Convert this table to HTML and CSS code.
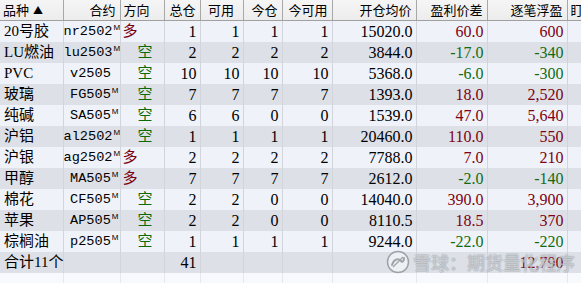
FILE: index.html
```html
<!DOCTYPE html>
<html>
<head>
<meta charset="utf-8">
<link rel="stylesheet" href="styles.css">
</head>
<body>
<div class="wrap">
<table class="grid">
<colgroup>
<col class="c1"><col class="c2"><col class="c3"><col class="c4"><col class="c5"><col class="c6"><col class="c7"><col class="c8"><col class="c9"><col class="c10"><col class="c11">
</colgroup>
<thead>
<tr>
<th class="l">品种<span class="tri">▲</span></th>
<th>合约</th>
<th class="l">方向</th>
<th>总仓</th>
<th class="c">可用</th>
<th>今仓</th>
<th>今可用</th>
<th>开仓均价</th>
<th>盈利价差</th>
<th>逐笔浮盈</th>
<th class="l">盯市浮盈</th>
</tr>
</thead>
<tbody>
<tr class="a"><td class="name">20号胶</td><td class="code">nr2502<sup>M</sup></td><td class="dir"><span class="long">多</span></td><td>1</td><td>1</td><td>1</td><td>1</td><td>15020.0</td><td class="up">60.0</td><td class="up">600</td><td></td></tr>
<tr class="b"><td class="name">LU燃油</td><td class="code">lu2503<sup>M</sup></td><td class="dir"><span class="short">空</span></td><td>2</td><td>2</td><td>2</td><td>2</td><td>3844.0</td><td class="dn">-17.0</td><td class="dn">-340</td><td></td></tr>
<tr class="a"><td class="name">PVC</td><td class="code">v2505<sup class="blank">M</sup></td><td class="dir"><span class="short">空</span></td><td>10</td><td>10</td><td>10</td><td>10</td><td>5368.0</td><td class="dn">-6.0</td><td class="dn">-300</td><td></td></tr>
<tr class="b"><td class="name">玻璃</td><td class="code">FG505<sup>M</sup></td><td class="dir"><span class="short">空</span></td><td>7</td><td>7</td><td>7</td><td>7</td><td>1393.0</td><td class="up">18.0</td><td class="up">2,520</td><td></td></tr>
<tr class="a"><td class="name">纯碱</td><td class="code">SA505<sup>M</sup></td><td class="dir"><span class="short">空</span></td><td>6</td><td>6</td><td>0</td><td>0</td><td>1539.0</td><td class="up">47.0</td><td class="up">5,640</td><td></td></tr>
<tr class="b"><td class="name">沪铝</td><td class="code">al2502<sup>M</sup></td><td class="dir"><span class="short">空</span></td><td>1</td><td>1</td><td>1</td><td>1</td><td>20460.0</td><td class="up">110.0</td><td class="up">550</td><td></td></tr>
<tr class="a"><td class="name">沪银</td><td class="code">ag2502<sup>M</sup></td><td class="dir"><span class="long">多</span></td><td>2</td><td>2</td><td>2</td><td>2</td><td>7788.0</td><td class="up">7.0</td><td class="up">210</td><td></td></tr>
<tr class="b"><td class="name">甲醇</td><td class="code">MA505<sup>M</sup></td><td class="dir"><span class="long">多</span></td><td>7</td><td>7</td><td>7</td><td>7</td><td>2612.0</td><td class="dn">-2.0</td><td class="dn">-140</td><td></td></tr>
<tr class="a"><td class="name">棉花</td><td class="code">CF505<sup>M</sup></td><td class="dir"><span class="short">空</span></td><td>2</td><td>2</td><td>0</td><td>0</td><td>14040.0</td><td class="up">390.0</td><td class="up">3,900</td><td></td></tr>
<tr class="b"><td class="name">苹果</td><td class="code">AP505<sup>M</sup></td><td class="dir"><span class="short">空</span></td><td>2</td><td>2</td><td>0</td><td>0</td><td>8110.5</td><td class="up">18.5</td><td class="up">370</td><td></td></tr>
<tr class="a"><td class="name">棕榈油</td><td class="code">p2505<sup>M</sup></td><td class="dir"><span class="short">空</span></td><td>1</td><td>1</td><td>1</td><td>1</td><td>9244.0</td><td class="dn">-22.0</td><td class="dn">-220</td><td></td></tr>
<tr class="b"><td class="name">合计11个</td><td></td><td></td><td>41</td><td></td><td></td><td></td><td></td><td></td><td class="up">12,790</td><td></td></tr>
<tr class="e"><td></td><td></td><td></td><td></td><td></td><td></td><td></td><td></td><td></td><td></td><td></td></tr>
</tbody>
</table>
<div class="mark">
<svg class="logo" width="24" height="24" viewBox="0 0 24 24"><circle cx="12" cy="12" r="10.5" fill="rgba(255,255,255,0.5)" stroke="#9ea3aa" stroke-width="1.5"/><path d="M6 15 C8 9, 12 8, 15 11 C17 13, 18 10, 18 8" fill="none" stroke="#9ea3aa" stroke-width="2" stroke-linecap="round"/><path d="M7 17 L17 7" fill="none" stroke="#9ea3aa" stroke-width="1.3"/></svg>
<span class="mtext">雪球：期货量化程序</span>
</div>
</div>
</body>
</html>
```

FILE: styles.css
```css
html, body {
  margin: 0;
  padding: 0;
  background: #ffffff;
  overflow: hidden;
}
.wrap {
  position: relative;
  width: 581px;
  height: 283px;
  overflow: hidden;
}
.grid {
  border-collapse: collapse;
  table-layout: fixed;
  width: 647px;
  font-family: "Liberation Serif", "Noto Sans CJK SC", serif;
  font-size: 16px;
  color: #000;
}
.c1 { width: 63px; }
.c2 { width: 57px; }
.c3 { width: 44px; }
.c4 { width: 36px; }
.c5 { width: 43px; }
.c6 { width: 39px; }
.c7 { width: 50px; }
.c8 { width: 84px; }
.c9 { width: 71px; }
.c10 { width: 80px; }
.c11 { width: 80px; }

thead th {
  height: 20px;
  padding: 0 4px 0 3px;
  background: linear-gradient(#f5f5f5, #ececec);
  border-right: 1px solid #a8a8a8;
  border-bottom: 1px solid #a0a0a0;
  font-family: "Noto Sans CJK SC", sans-serif;
  font-weight: normal;
  font-size: 13px;
  line-height: 20px;
  text-align: right;
  white-space: nowrap;
  overflow: hidden;
}
thead th.l { text-align: left; }
thead th.c { text-align: center; }
.tri { font-size: 10px; vertical-align: 1px; margin-left: 4px; }

tbody td {
  height: 21px;
  padding: 0 3px 0 2px;
  line-height: 21px;
  text-align: right;
  white-space: nowrap;
  overflow: hidden;
  border-right: 1px solid #d2d6dc;
}
tbody td.name {
  text-align: left;
  padding-left: 4px;
  padding-right: 0;
  font-size: 15px;
  overflow: visible;
}
tbody td.dir {
  text-align: left;
  padding-left: 2px;
  font-size: 15px;
}
tbody td.code {
  padding: 0 1px 0 0;
  font-family: "Liberation Mono", monospace;
  font-size: 13.6px;
}
tbody tr.a td { background: #eff3f9; }
tbody tr.b td { background: #dde1e7; }
tbody tr.e td { background: #f7f9fc; border-right-color: #e4e7ec; }

sup {
  font-family: "Liberation Sans", sans-serif;
  font-size: 8px;
  line-height: 0;
  vertical-align: 5px;
  margin-left: 1px;
}
sup.blank { visibility: hidden; }
.long { color: #7a0010; }
.short { color: #0a6a0a; margin-left: 15px; }
.up { color: #7e0014; }
.dn { color: #126b12; }

.mark {
  position: absolute;
  left: 386px;
  top: 250px;
  display: flex;
  align-items: center;
  gap: 3px;
  white-space: nowrap;
}
.mtext {
  font-family: "Noto Sans CJK SC", sans-serif;
  font-size: 18px;
  line-height: 24px;
  color: rgba(255, 255, 255, 0.3);
  text-shadow: 1px 0 0 rgba(150, 156, 164, 0.35), -1px 0 0 rgba(150, 156, 164, 0.35), 0 1px 0 rgba(150, 156, 164, 0.35), 0 -1px 0 rgba(150, 156, 164, 0.35);
}
```
